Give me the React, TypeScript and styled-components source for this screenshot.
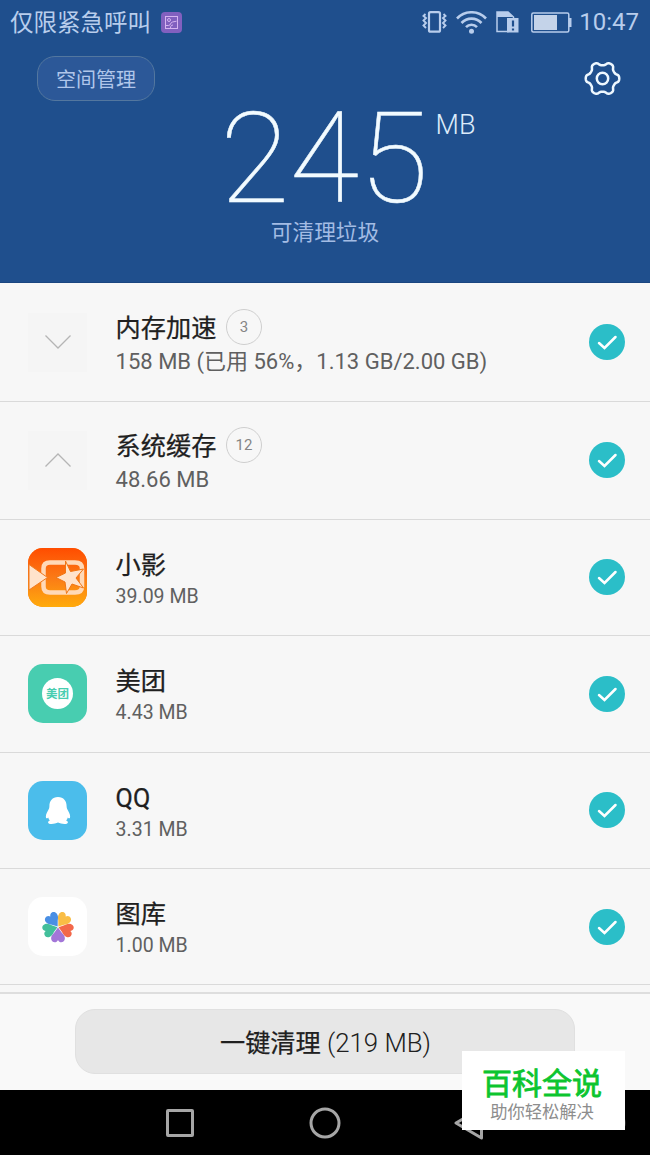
import React from 'react';
import styled, { createGlobalStyle } from 'styled-components';

const GlobalStyle = createGlobalStyle`
  * { box-sizing: border-box; }
  body { margin: 0; background: #f7f7f7; font-family: Roboto, "Noto Sans CJK SC", sans-serif; }
  svg { display: block; flex: none; }
`;

const Screen = styled.div`
  position: relative;
  width: 650px;
  height: 1155px;
  overflow: hidden;
  display: flex;
  flex-direction: column;
`;

const Header = styled.header`
  height: 283px;
  flex: none;
  background: #1f4f8d;
  border-bottom: 1px solid #1b4680;
`;

const StatusBar = styled.div`
  height: 44px;
  padding: 0 11px 0 10px;
  display: flex;
  align-items: center;
  color: #b8cdec;
`;

const Carrier = styled.span`
  font-size: 23.5px;
  line-height: 42px;
  padding-top: 2px;
  margin-right: 10px;
`;

const StatusIcons = styled.div`
  display: flex;
  align-items: center;
  margin-left: auto;
  gap: 9px;
`;

const Clock = styled.span`
  font-size: 24px;
  line-height: 46px;
  margin-left: -2px;
`;

const Toolbar = styled.div`
  display: flex;
  justify-content: space-between;
  padding: 12px 29px 0 37px;
`;

const Pill = styled.button`
  width: 118px;
  height: 45px;
  padding: 4px 0 0;
  border: 1px solid #53779f;
  border-radius: 18px;
  background: #2c5898;
  color: #b0c6ea;
  font: 400 20px/39px Roboto, "Noto Sans CJK SC", sans-serif;
`;

const Amount = styled.div`
  display: flex;
  margin: 11px 0 0 220px;
  height: 90px;
  color: #f2fbff;
`;

const AmountValue = styled.span`
  font-size: 127px;
  line-height: 93px;
  font-weight: 100;
  -webkit-text-stroke: 0.5px #f2fbff;
`;

const AmountUnit = styled.span`
  font-size: 27px;
  line-height: 26px;
  font-weight: 300;
  color: #dcebfa;
  margin-left: 7px;
`;

const Caption = styled.div`
  margin-top: 15px;
  text-align: center;
  font-size: 21.7px;
  line-height: 32px;
  color: #a3bce4;
`;

const List = styled.main`
  flex: 1;
  background: #f7f7f7;
`;

const Row = styled.section<{ $height: number }>`
  height: ${(p) => p.$height}px;
  border-bottom: 1px solid #dadada;
  display: flex;
  align-items: center;
  padding: 0 25.5px 0 28px;
`;

const Tile = styled.div<{ $bg: string; $flat?: boolean }>`
  width: 59px;
  height: 59px;
  border-radius: ${(p) => (p.$flat ? 0 : 15)}px;
  background: ${(p) => p.$bg};
  display: flex;
  align-items: center;
  justify-content: center;
  overflow: hidden;
`;

const Texts = styled.div<{ $group?: boolean }>`
  flex: 1;
  margin-left: 28.6px;
  padding-top: ${(p) => (p.$group ? 3.5 : 7.4)}px;
`;

const TitleLine = styled.div<{ $group?: boolean }>`
  display: flex;
  align-items: center;
  height: ${(p) => (p.$group ? 36 : 32)}px;
`;

const Title = styled.span`
  font-size: 25.2px;
  line-height: 32px;
  color: #202020;
  -webkit-text-stroke: 0.25px #202020;
`;

const Count = styled.span`
  width: 36px;
  height: 36px;
  margin: -3px 0 1px 9.6px;
  border: 1px solid #cfcfcf;
  border-radius: 50%;
  text-align: center;
  font-size: 15px;
  line-height: 35px;
  color: #858585;
`;

const Size = styled.div<{ $group?: boolean }>`
  font-size: ${(p) => (p.$group ? 22 : 19.5)}px;
  line-height: 30px;
  color: #606060;
`;

const Check = styled.div`
  width: 36px;
  height: 36px;
  border-radius: 50%;
  background: #2bbec8;
`;

const MeituanDisc = styled.div`
  width: 31px;
  height: 31px;
  border-radius: 50%;
  background: #fff;
  color: #48cdb0;
  font-size: 11.5px;
  font-weight: 700;
  line-height: 33px;
  text-align: center;
  white-space: nowrap;
`;

const Footer = styled.footer`
  height: 98px;
  flex: none;
  border-top: 2px solid #dedede;
  background: #f9f9f9;
  padding-top: 15px;
`;

const CleanButton = styled.button`
  display: block;
  width: 500px;
  height: 65px;
  margin: 0 auto;
  padding: 3px 0 0 1px;
  border: 1px solid #e0e0e0;
  border-radius: 20px;
  background: #e7e7e7;
  color: #202020;
  font: 300 25.8px/60px Roboto, "Noto Sans CJK SC", sans-serif;
`;

const CleanLabel = styled.span`
  font-size: 25.2px;
  font-weight: 400;
  -webkit-text-stroke: 0.25px #202020;
`;

const NavBar = styled.nav`
  height: 65px;
  flex: none;
  background: #000;
  padding-left: 108px;
  display: grid;
  grid-template-columns: repeat(4, 144.5px);
  align-items: center;
  justify-items: center;
`;

const Stamp = styled.aside`
  position: absolute;
  left: 462px;
  top: 1051px;
  width: 163px;
  height: 79px;
  background: #fff;
  text-align: center;
  padding: 14px 3px 0 0;
`;

const StampTitle = styled.div`
  font-size: 30px;
  line-height: 37px;
  color: #0cc52f;
  -webkit-text-stroke: 0.8px #0cc52f;
`;

const StampText = styled.div`
  font-size: 17.3px;
  line-height: 20px;
  color: #8d8d8d;
`;

const VibrateIcon = () => (
  <svg width="25" height="22" viewBox="0 0 25 22" fill="none" stroke="currentColor">
    <rect x="7" y="1.200" width="11" height="19.500" rx="1.500" strokeWidth="2.200" />
    <path d="M3.500 3l-2 2 2.500 2-2.500 2.500 2.500 2.500-2.500 2.500 2.500 2.500M21.500 3l2 2-2.500 2 2.500 2.500-2.500 2.500 2.500 2.500-2.500 2.500" strokeWidth="1.900" />
  </svg>
);

const WifiIcon = () => (
  <svg width="31" height="23" viewBox="0 0 31 23" fill="none" stroke="currentColor" strokeWidth="2.600">
    <path d="M1 7.500C9-.8 22-.8 30 7.500M5.500 12C11 6.200 20 6.200 25.500 12M10 16.200c3-3.200 8-3.200 11 0" />
    <circle cx="15.500" cy="20.300" r="2.500" fill="currentColor" stroke="none" />
  </svg>
);

const SimAlertIcon = () => (
  <svg width="23" height="22" viewBox="0 0 23 22">
    <path d="M1 2v18.500h11V8h5.500V6L12 1H1z" fill="none" stroke="currentColor" strokeWidth="1.500" />
    <path d="M1 1h11l5 5H1z" fill="currentColor" />
    <rect x="11" y="7" width="11.500" height="14.500" fill="currentColor" />
    <path d="M17 9.500v6M17 17.500v2" stroke="#1f4f8d" strokeWidth="2.200" />
  </svg>
);

const BatteryIcon = () => (
  <svg width="44" height="21" viewBox="-3 0 44 21">
    <rect x=".8" y="1" width="37" height="19" rx="1.500" fill="none" stroke="currentColor" strokeWidth="1.500" />
    <path d="M38 6h2.500v9H38z" fill="currentColor" />
    <rect x="3" y="3" width="23" height="15" fill="#c4d3e9" />
  </svg>
);

const PictureBadge = () => (
  <svg width="21" height="21" viewBox="0 0 21 21" fill="none" stroke="#d5b4f0" strokeWidth="1">
    <rect width="21" height="21" rx="4" fill="#8160bf" stroke="none" />
    <rect x="4.500" y="4.500" width="12" height="12" />
    <circle cx="8" cy="8" r="1.500" />
    <path d="M5 13.500h2.500c2.500 0 1.500-3 4-3.500l4-.8M9.500 16c0-1.800.8-3 2.500-3" />
  </svg>
);

const gearPath =
  Array.from({ length: 120 }, (_, i) => {
    const a = (i / 120) * Math.PI * 2;
    const r = 15 + 1.75 * (Math.tanh(1.6 * Math.cos(6 * a)) / Math.tanh(1.6));
    return `${i ? 'L' : 'M'}${(r * Math.cos(a)).toFixed(2)} ${(r * Math.sin(a)).toFixed(2)}`;
  }).join('') + 'Z';

const GearIcon = () => (
  <svg width="37" height="45" viewBox="-18.5 -22.5 37 45" fill="none" stroke="#eef8ff" strokeWidth="2.500">
    <path d={gearPath} strokeLinejoin="round" />
    <circle r="5.700" />
  </svg>
);

const Chevron = ({ up }: { up?: boolean }) => (
  <svg width="26" height="14" viewBox="0 0 26 14" fill="none" stroke="#b5b5b5" strokeWidth="1.300">
    <path d={up ? 'M.5 13.500L13 1l12.500 12.500' : 'M.5.5L13 13 25.500.5'} />
  </svg>
);

const VideoIcon = () => (
  <svg width="59" height="59" viewBox="0 0 59 59">
    <defs>
      <linearGradient id="sunset" x1="0" y1="0" x2="0" y2="1">
        <stop offset="0" stopColor="#ff4d00" />
        <stop offset=".5" stopColor="#fb7a16" />
        <stop offset="1" stopColor="#ffab0c" />
      </linearGradient>
    </defs>
    <rect width="59" height="59" fill="url(#sunset)" />
    <path d="M22 14.500h25c5 0 7 2 7 6v18c0 4-2 6-7 6H22c-4.500 0-6.500-2-6.500-6v-18c0-4 2-6 6.500-6z" fill="none" stroke="#ffd9b8" strokeWidth="4.500" />
    <path d="M1 16.500L19.500 29.500 1 42z" fill="#ffe3cb" stroke="#f07a20" strokeWidth="1" />
    <path d="M37.500 13l5 10.500L55.500 21l-7.500 9 7.500 10-11.500-4-5.500 9.500-1.500-11.500-9-4.500 9.500-4.500z" fill="#ffe3cb" stroke="#ef7615" strokeWidth="1" strokeLinejoin="round" />
  </svg>
);

const PenguinIcon = () => (
  <svg width="26" height="29" viewBox="0 0 26 29" fill="#fff">
    <path d="M13 1C7.300 1 4.400 5 4.400 10c0 2-.5 3-1.500 4.700C1.300 17.300.5 20 1 21.800c.5 1 1.500.4 2.200-.4.300 1.200.9 2.200 1.700 3-3 1.200-2.200 3.600 1.600 3.600 2.700 0 4.500-.5 6.500-1.400 2 .9 3.800 1.400 6.500 1.400 3.800 0 4.600-2.400 1.600-3.600.8-.8 1.400-1.800 1.700-3 .7.800 1.700 1.400 2.200.4.500-1.800-.3-4.500-1.900-7.100-1-1.700-1.500-2.700-1.500-4.700 0-5-2.900-9-8.600-9z" />
  </svg>
);

const petals: [string, number][] = [
  ['#f3684a', 108],
  ['#a376d8', 180],
  ['#43bf9b', 252],
  ['#4a8fe4', 324],
  ['#f9bd45', 36],
];

const GalleryIcon = () => (
  <svg width="34" height="34" viewBox="-17 -17 34 34">
    {petals.map(([color, angle]) => (
      <path
        key={color}
        d="M0-.6L-3.600-5.400C-5-7-6.900-8.500-6.900-11.200c0-4.500 5.300-5.600 6.900-1.800 1.600-3.800 6.900-2.700 6.900 1.800C6.900-8.500 5-7 3.600-5.400z"
        fill={color}
        transform={`rotate(${angle})`}
      />
    ))}
  </svg>
);

const CheckMark = () => (
  <Check>
    <svg width="36" height="36" viewBox="0 0 36 36" fill="none" stroke="#fff" strokeWidth="2.500" strokeLinecap="round">
      <path d="M10 19l5.500 5L26.500 13" />
    </svg>
  </Check>
);

interface Entry {
  title: string;
  size: string;
  height: number;
  bg: string;
  icon: React.ReactNode;
  count?: number;
}

const entries: Entry[] = [
  { title: '内存加速', size: '158 MB (已用 56%，1.13 GB/2.00 GB)', height: 119, bg: '#f5f5f5', icon: <Chevron />, count: 3 },
  { title: '系统缓存', size: '48.66 MB', height: 117.5, bg: '#f5f5f5', icon: <Chevron up />, count: 12 },
  { title: '小影', size: '39.09 MB', height: 116.5, bg: '#fb7a16', icon: <VideoIcon /> },
  { title: '美团', size: '4.43 MB', height: 116.5, bg: '#48cdb0', icon: <MeituanDisc>美团</MeituanDisc> },
  { title: 'QQ', size: '3.31 MB', height: 116.5, bg: '#4bbdeb', icon: <PenguinIcon /> },
  { title: '图库', size: '1.00 MB', height: 116, bg: '#ffffff', icon: <GalleryIcon /> },
];

export default function App() {
  return (
    <Screen>
      <GlobalStyle />
      <Header>
        <StatusBar>
          <Carrier>仅限紧急呼叫</Carrier>
          <PictureBadge />
          <StatusIcons>
            <VibrateIcon />
            <WifiIcon />
            <SimAlertIcon />
            <BatteryIcon />
            <Clock>10:47</Clock>
          </StatusIcons>
        </StatusBar>
        <Toolbar>
          <Pill>空间管理</Pill>
          <GearIcon />
        </Toolbar>
        <Amount>
          <AmountValue>245</AmountValue>
          <AmountUnit>MB</AmountUnit>
        </Amount>
        <Caption>可清理垃圾</Caption>
      </Header>
      <List>
        {entries.map((e) => {
          const group = e.count !== undefined;
          return (
            <Row key={e.title} $height={e.height}>
              <Tile $bg={e.bg} $flat={group}>{e.icon}</Tile>
              <Texts $group={group}>
                <TitleLine $group={group}>
                  <Title>{e.title}</Title>
                  {group && <Count>{e.count}</Count>}
                </TitleLine>
                <Size $group={group}>{e.size}</Size>
              </Texts>
              <CheckMark />
            </Row>
          );
        })}
      </List>
      <Footer>
        <CleanButton>
          <CleanLabel>一键清理</CleanLabel> (219 MB)
        </CleanButton>
      </Footer>
      <NavBar>
        <svg width="30" height="30" fill="none" stroke="#a6a6a6" strokeWidth="3">
          <rect x="2.500" y="2.500" width="25" height="25" rx=".5" />
        </svg>
        <svg width="32" height="32" fill="none" stroke="#a6a6a6" strokeWidth="3">
          <circle cx="16" cy="16" r="14" />
        </svg>
        <svg width="30" height="36" fill="none" stroke="#a6a6a6" strokeWidth="3" strokeLinejoin="round">
          <path d="M2 18L27.500 3v30z" />
        </svg>
        <svg width="24" height="14" fill="none" stroke="#333" strokeWidth="1.500">
          <rect x="1" y="1" width="22" height="12" rx="5" />
        </svg>
      </NavBar>
      <Stamp>
        <StampTitle>百科全说</StampTitle>
        <StampText>助你轻松解决</StampText>
      </Stamp>
    </Screen>
  );
}
